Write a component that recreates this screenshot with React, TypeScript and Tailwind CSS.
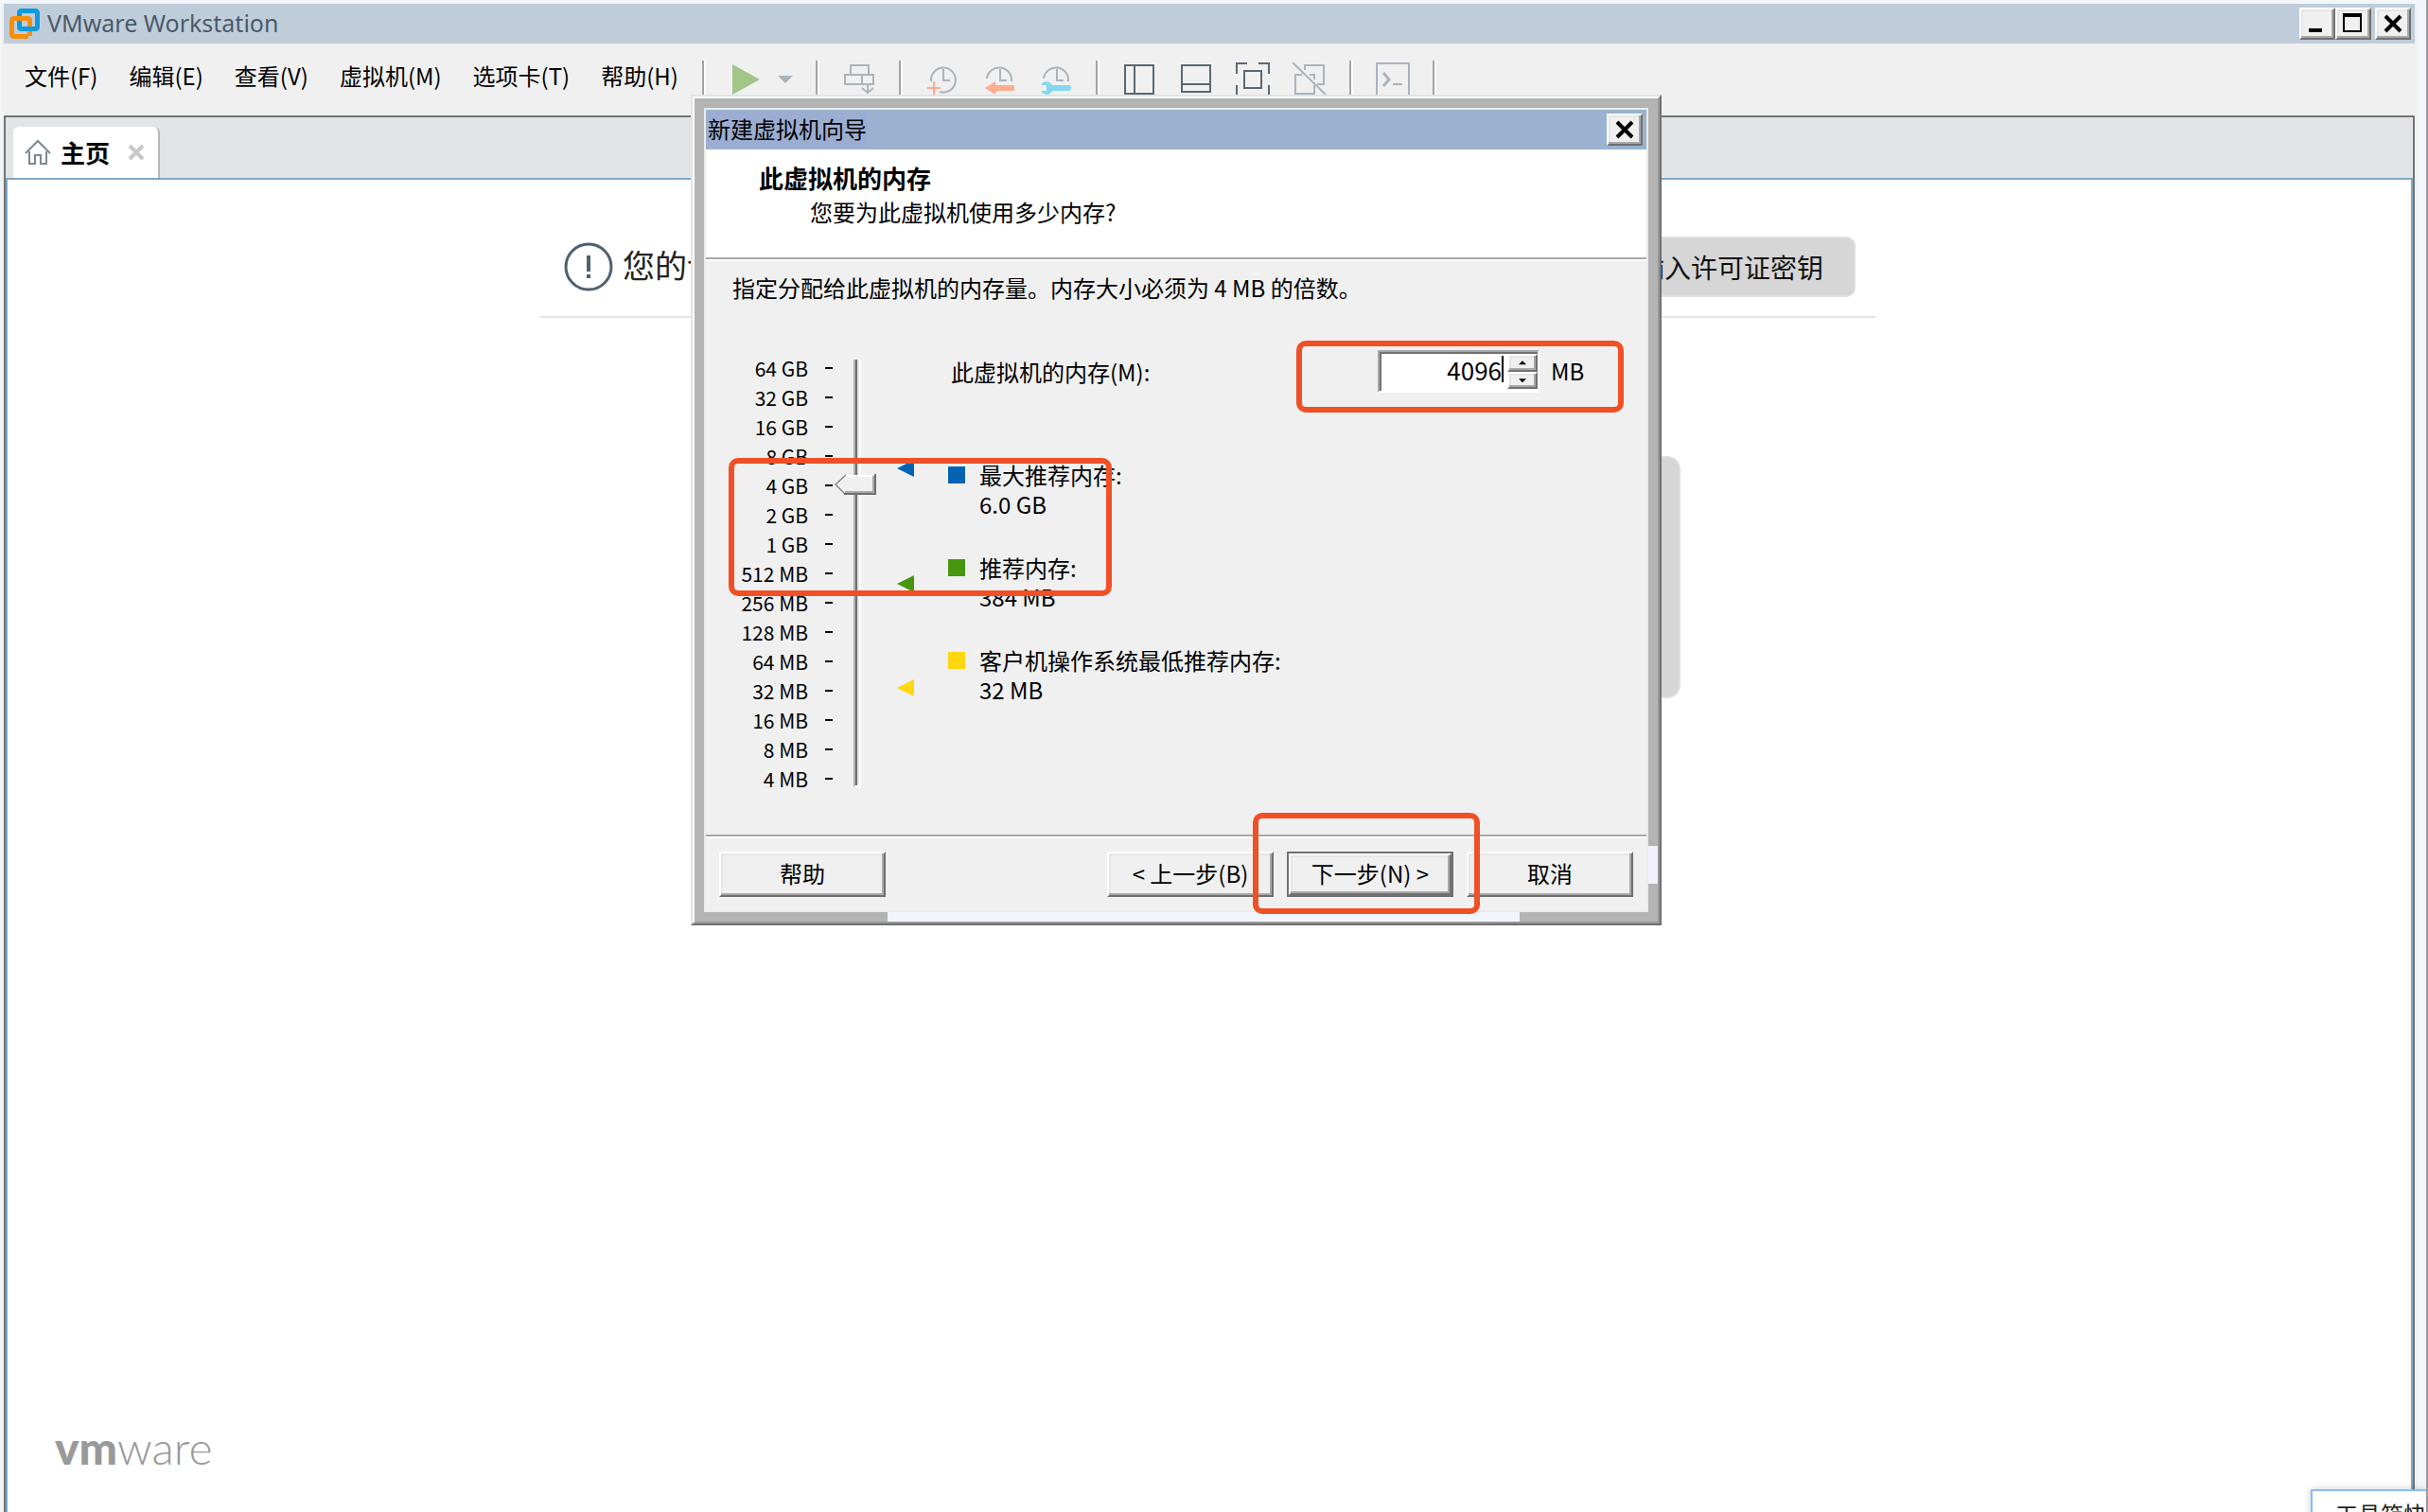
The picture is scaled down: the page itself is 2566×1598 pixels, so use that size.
import { useState } from "react";
import type { ReactNode } from "react";

const menus = ["文件(F)", "编辑(E)", "查看(V)", "虚拟机(M)", "选项卡(T)", "帮助(H)"];

const sizes = [
  "64 GB",
  "32 GB",
  "16 GB",
  "8 GB",
  "4 GB",
  "2 GB",
  "1 GB",
  "512 MB",
  "256 MB",
  "128 MB",
  "64 MB",
  "32 MB",
  "16 MB",
  "8 MB",
  "4 MB",
];

const hints = [
  { label: "最大推荐内存:", value: "6.0 GB", mb: 6144, bg: "bg-[#0063b1]", fill: "fill-[#0063b1]" },
  { label: "推荐内存:", value: "384 MB", mb: 384, bg: "bg-[#489610]", fill: "fill-[#489610]" },
  { label: "客户机操作系统最低推荐内存:", value: "32 MB", mb: 32, bg: "bg-[#ffd60f]", fill: "fill-[#ffd60f]" },
];

const bevel =
  "border-2 border-t-white border-l-white border-r-[#707070] border-b-[#707070] bg-[#f0f0f0] shadow-[inset_-2px_-2px_0_#a8a8a8,inset_2px_2px_0_#e6e6e6]";

// distance of a memory size from the top of the scale, one step per doubling
function scaleTop(mb: number) {
  return Math.round(20 + Math.log2(65536 / mb) * 30.6);
}

function Separator() {
  return <span className="h-9 w-1 shrink-0 border-l-2 border-r-2 border-l-[#a3a3a3] border-r-white" />;
}

function ToolButton({ label, tone = "stroke-[#a9b4bd]", children }: { label: string; tone?: string; children: ReactNode }) {
  return (
    <button type="button" aria-label={label} className="size-9 shrink-0">
      <svg viewBox="0 0 36 36" className={`size-9 fill-none stroke-2 ${tone}`}>
        {children}
      </svg>
    </button>
  );
}

function Toolbar() {
  const dark = "stroke-[#596975]";
  return (
    <div className="flex items-center gap-6">
      <Separator />
      <div className="flex items-center">
        <button type="button" aria-label="开启虚拟机" className="size-9">
          <svg viewBox="0 0 36 36" className="size-9 fill-[#a1c687]">
            <path d="M4 4 L33 20 L4 36 Z" />
          </svg>
        </button>
        <button type="button" aria-label="电源选项" className="h-9 w-8">
          <svg viewBox="0 0 32 36" className="h-9 w-8 fill-[#a9b4bd]">
            <path d="M16 16 H32 L24 24 Z" />
          </svg>
        </button>
      </div>
      <Separator />
      <ToolButton label="发送 Ctrl+Alt+Del">
        <path d="M9 15 V5 H28 V15 M3 15 H33 V25 H3 Z M21 15 V25 M27 25 V35 M21 29 L27 34 L33 29" />
      </ToolButton>
      <Separator />
      <ToolButton label="拍摄快照">
        <path d="M6 22 A13 13 0 1 1 15 33 M19 9 V21 H26" />
        <path d="M9 22 V36 M2 29 H16" className="stroke-[#ffac8f]" />
      </ToolButton>
      <ToolButton label="恢复快照">
        <path d="M5 19 A13 13 0 1 1 31 22 M19 9 V21 H26" />
        <path d="M3 29 L14 22 V26 H34 V32 H14 V36 Z" className="fill-[#ffac8f] stroke-none" />
      </ToolButton>
      <ToolButton label="管理快照">
        <path d="M5 19 A13 13 0 1 1 31 22 M19 9 V21 H26" />
        <path
          d="M3 24 Q7 21 11 23 Q13 24 14 26 H32 Q34 26 34 29 Q34 32 32 32 H14 Q13 35 9 36 Q6 36 3 34 V32 H8 V26 H3 Z"
          className="fill-[#84d7f0] stroke-none"
        />
      </ToolButton>
      <Separator />
      <ToolButton label="显示库" tone={dark}>
        <path d="M3 5 H33 V35 H3 Z M13 5 V35" />
      </ToolButton>
      <ToolButton label="显示缩略图栏" tone={dark}>
        <path d="M3 5 H33 V33 H3 Z M3 25 H33" />
      </ToolButton>
      <ToolButton label="进入全屏" tone={dark}>
        <path d="M1 14 V3 H12 M24 3 H35 V14 M1 26 V36 M35 26 V36 M9 11 H27 V29 H9 Z" />
      </ToolButton>
      <ToolButton label="Unity 模式">
        <path d="M13 10 V5 H33 V25 H26 M10 15 H3 V35 H23 V26 M18 15 H23 V20 M0 2 L35 36" />
      </ToolButton>
      <Separator />
      <ToolButton label="控制台视图">
        <path d="M1 3 H35 V39 H1 Z" />
        <path d="M8 13 L14 20 L8 27" strokeWidth="3" />
        <path d="M18 25 H28" />
      </ToolButton>
      <Separator />
    </div>
  );
}

function TitleBar() {
  return (
    <header className="mx-0.5 flex h-[42px] items-center bg-[#bfcddb] pr-1 pl-1.5">
      <svg viewBox="0 0 32 32" className="size-8 fill-none" strokeWidth="5">
        <rect x="10.500" y="2.500" width="19" height="19" rx="2" className="stroke-[#0e9ade]" />
        <path d="M20 29.500 H5 Q2.500 29.500 2.500 27 V13 Q2.500 10.500 5 10.500 H19 Q21.500 10.500 21.500 13 V29" className="stroke-[#f68e0b]" />
        <path d="M10.500 13 V19 Q10.500 21.500 13 21.500 H24" className="stroke-[#0e9ade]" />
      </svg>
      <h1 className="ml-2 font-['Noto_Sans','Noto_Sans_CJK_SC',sans-serif] text-[25px] text-[#4b5a68]">
        VMware Workstation
      </h1>
      <div className="ml-auto flex">
        <button type="button" aria-label="最小化" className={`h-[34px] w-[38px] ${bevel}`}>
          <svg viewBox="0 0 34 30" className="h-full w-full">
            <path d="M8 20 H22 V24 H8 Z" />
          </svg>
        </button>
        <button type="button" aria-label="最大化" className={`h-[34px] w-[38px] ${bevel}`}>
          <svg viewBox="0 0 34 30" className="h-full w-full">
            <path d="M6 4 H26 V24 H6 Z M8 8 V22 H24 V8 Z" fillRule="evenodd" />
          </svg>
        </button>
        <button type="button" aria-label="关闭" className={`ml-1 h-[34px] w-[38px] ${bevel}`}>
          <svg viewBox="0 0 34 30" className="h-full w-full stroke-black" strokeWidth="4">
            <path d="M9 7 L25 23 M25 7 L9 23" />
          </svg>
        </button>
      </div>
    </header>
  );
}

function HomePage() {
  return (
    <main className="flex min-h-0 flex-1 flex-col border-x-2 border-t-2 border-[#7fa8c6] bg-white pr-1">
      <div className="mx-auto mt-[60px] flex w-full max-w-[1412px] items-center gap-2.5 border-b-2 border-[#e6e6e6] pr-[21px] pb-5 pl-[26px]">
        <svg viewBox="0 0 52 52" className="size-[52px] fill-none stroke-[#50606f]" strokeWidth="3">
          <circle cx="26" cy="26" r="24" />
          <path d="M26 14 V31 M26 34 V38" strokeWidth="4" />
        </svg>
        <p className="pb-1 text-[34px] leading-[52px] text-[#222]">您的许可证</p>
        <button type="button" className="ml-auto h-16 rounded-[10px] border-2 border-[#dfdfdf] bg-[#d6d6d6] px-8 text-[28px] text-[#111]">
          输入许可证密钥
        </button>
      </div>
      <div className="mx-auto mt-[146px] flex w-full max-w-[1000px] justify-between">
        <button type="button" aria-label="创建新的虚拟机" className="size-64 rounded-[14px] border-2 border-[#dfdfdf] bg-[#d6d6d6]" />
        <button type="button" aria-label="打开虚拟机" className="size-64 rounded-[14px] border-2 border-[#dfdfdf] bg-[#d6d6d6]" />
        <button type="button" aria-label="连接远程服务器" className="size-64 rounded-[14px] border-2 border-[#dfdfdf] bg-[#d6d6d6]" />
      </div>
      <p className="mt-auto pb-[38px] pl-[50px] font-['Lato',sans-serif] text-[48px] leading-[60px] text-[#999]">
        <span className="font-black">vm</span>
        <span className="font-light">ware</span>
      </p>
    </main>
  );
}

function MemorySlider({ memory, onChange }: { memory: number; onChange: (mb: number) => void }) {
  return (
    <div className="relative w-[120px]">
      <span className="absolute top-2.5 bottom-2 left-5 w-2 border-x-2 border-b-2 border-l-[#b0b0b0] border-r-white border-b-white bg-[linear-gradient(to_right,#707070_50%,#e6e6e6_50%)]" />
      <svg
        viewBox="0 0 44 22"
        className="absolute left-0 h-[22px] w-11 -translate-y-1/2"
        style={{ top: scaleTop(memory) }}
      >
        <path d="M1 11 L11 1 H43 V21 H11 Z" className="fill-[#f0f0f0]" />
        <path d="M11 20 L2 11 L11 2 H41" className="fill-none stroke-white stroke-2" />
        <path d="M12 1 L1 11 L11 21" className="fill-none stroke-[#808080]" strokeWidth="1.500" />
        <path d="M11 19 H41 V2" className="fill-none stroke-[#a8a8a8] stroke-2" />
        <path d="M10 21 H43 V0" className="fill-none stroke-[#707070] stroke-2" />
      </svg>
      {hints.map((hint) => (
        <svg
          key={hint.mb}
          viewBox="0 0 18 18"
          className={`absolute left-[66px] size-[18px] -translate-y-1/2 ${hint.fill}`}
          style={{ top: scaleTop(hint.mb) }}
        >
          <path d="M18 0 V18 L0 9 Z" />
        </svg>
      ))}
      <input
        type="range"
        aria-label="内存大小"
        min={2}
        max={16}
        value={Math.round(Math.log2(memory))}
        onChange={(e) => onChange(2 ** Number(e.target.value))}
        className="absolute top-0 left-0 h-full w-11 opacity-0 [direction:rtl] [writing-mode:vertical-lr]"
      />
    </div>
  );
}

function MemoryWizard() {
  const [memory, setMemory] = useState(4096);

  return (
    <section
      role="dialog"
      aria-labelledby="wizard-title"
      className="absolute top-[100px] left-[730px] w-[1026px] border-2 border-t-[#e3e3e3] border-r-[#707070] border-b-[#707070] border-l-[#e3e3e3] text-[24px] leading-9 text-black"
    >
      <div className="border-2 border-t-white border-r-[#999] border-b-[#999] border-l-white bg-[#b4b4b4] p-2.5">
        <div className="border-2 border-[#ebebeb] bg-[#f0f0f0]">
          <div className="flex h-[42px] items-center justify-between bg-[#9ab2d0] pr-1 pl-0.5">
            <h2 id="wizard-title" className="bg-[#9badd1] pb-0.5">新建虚拟机向导</h2>
            <button type="button" aria-label="关闭向导" className={`h-[34px] w-[38px] ${bevel}`}>
              <svg viewBox="0 0 34 30" className="h-full w-full stroke-black" strokeWidth="4">
                <path d="M9 7 L25 23 M25 7 L9 23" />
              </svg>
            </button>
          </div>

          <div className="border-b-2 border-[#a9a9a9] bg-white pt-3 pb-[30px]">
            <h3 className="pl-14 text-[26px] font-bold">此虚拟机的内存</h3>
            <p className="pl-[110px]">您要为此虚拟机使用多少内存?</p>
          </div>

          <div className="border-t-2 border-white pt-2.5 pb-[42px] pl-7">
            <p>指定分配给此虚拟机的内存量。内存大小必须为 4 MB 的倍数。</p>
            <div className="mt-12 flex">
              <div className="flex">
                <ul className="pt-[3px] pb-0.5">
                  {sizes.map((size) => (
                    <li key={size} className="flex h-[31px] items-center text-[21px]">
                      <span className="w-20 text-right">{size}</span>
                      <span className="mr-0.5 ml-[18px] h-0.5 w-2 bg-black" />
                    </li>
                  ))}
                </ul>
                <MemorySlider memory={memory} onChange={setMemory} />
              </div>

              <div className="flex-1">
                <div className="flex h-[45px] items-center pl-[3px]">
                  <label htmlFor="memory" className="w-[451px]">
                    此虚拟机的内存(M):
                  </label>
                  <div className="flex h-full w-[171px] border-2 border-t-[#a8a8a8] border-r-white border-b-white border-l-[#a8a8a8] bg-white shadow-[inset_2px_2px_0_#707070]">
                    <input
                      id="memory"
                      type="text"
                      inputMode="numeric"
                      value={memory}
                      onChange={(e) => setMemory(Number(e.target.value) || 4)}
                      className="w-0 flex-1 bg-transparent pb-1 text-right text-[26px] leading-9 outline-none"
                    />
                    <span className="mt-1 mr-1 h-7 w-0.5 bg-black" />
                    <div className="flex w-8 flex-col pt-0.5 pb-0.5">
                      <button type="button" aria-label="增加" onClick={() => setMemory(memory + 4)} className={`flex-1 ${bevel}`}>
                        <svg viewBox="0 0 28 14" className="h-full w-full">
                          <path d="M10 9 L14 5 L18 9 Z" />
                        </svg>
                      </button>
                      <button type="button" aria-label="减少" onClick={() => setMemory(memory - 4)} className={`flex-1 ${bevel}`}>
                        <svg viewBox="0 0 28 14" className="h-full w-full">
                          <path d="M10 5 L14 9 L18 5 Z" />
                        </svg>
                      </button>
                    </div>
                  </div>
                  <span className="ml-3 pb-0.5">MB</span>
                </div>

                <dl className="mt-[71px] flex flex-col gap-9 leading-[31px]">
                  {hints.map((hint) => (
                    <div key={hint.label}>
                      <dt className="flex items-center gap-[15px]">
                        <span className={`size-[18px] ${hint.bg}`} />
                        {hint.label}
                      </dt>
                      <dd className="pl-[33px]">{hint.value}</dd>
                    </div>
                  ))}
                </dl>
              </div>
            </div>
          </div>

          <div className="border-t-2 border-[#a9a9a9]">
            <div className="flex gap-3.5 border-t-2 border-white p-3.5">
              <button type="button" className={`mr-auto h-12 w-44 pb-0.5 ${bevel}`}>
                帮助
              </button>
              <button type="button" className={`h-12 w-44 pb-0.5 ${bevel}`}>
                &lt; 上一步(B)
              </button>
              <div className="border-2 border-[#707070]">
                <button type="button" className={`block h-11 w-[172px] pb-0.5 ${bevel}`}>
                  下一步(N) &gt;
                </button>
              </div>
              <button type="button" className={`h-12 w-44 pb-0.5 ${bevel}`}>
                取消
              </button>
            </div>
          </div>
        </div>
      </div>
      {/* gaps in the frame */}
      <span className="absolute bottom-0.5 left-[206px] h-2.5 w-[668px] bg-[#f2f5fb]" />
      <span className="absolute right-0.5 bottom-[42px] h-10 w-2.5 bg-[#f3f0fc]" />
    </section>
  );
}

export default function App() {
  return (
    <div className="relative flex h-screen flex-col overflow-hidden border-r-2 border-[#999] bg-[#f2f6fb] pt-1 pr-2.5 pl-0.5 font-['Noto_Sans_CJK_SC',sans-serif]">
      <div className="flex min-h-0 flex-1 flex-col bg-[#f0f0f0]">
        <TitleBar />
        <div className="mb-1 flex h-[72px] items-center">
          <nav className="flex w-[740px] shrink-0 gap-[33px] pb-1 pl-6 text-[24px] leading-9 whitespace-nowrap">
            {menus.map((menu) => (
              <button key={menu} type="button">
                {menu}
              </button>
            ))}
          </nav>
          <Toolbar />
        </div>

        <div className="mx-0.5 flex min-h-0 flex-1 flex-col border-x-2 border-t-2 border-[#737373]">
          <div className="flex h-16 items-end bg-[#e2e4e7] pl-2">
            <div className="flex h-[54px] w-[155px] items-center rounded-t-md border-r-2 border-[#b8b8b8] bg-white pr-3.5 pl-3">
              <svg viewBox="0 0 28 28" className="size-7 fill-none stroke-[#7b8895] stroke-2">
                <path d="M1 15 L14 2 L27 15 M5 13 V26 H11 V17 H17 V26 H23 V13" />
              </svg>
              <span className="ml-2.5 text-[26px] leading-9 font-bold">主页</span>
              <button type="button" aria-label="关闭标签页" className="ml-auto">
                <svg viewBox="0 0 18 18" className="size-[18px] stroke-[#c8c8c8]" strokeWidth="4">
                  <path d="M2 2 L16 16 M16 2 L2 16" />
                </svg>
              </button>
            </div>
          </div>
          <HomePage />
        </div>
      </div>

      <MemoryWizard />

      {/* highlights */}
      <span className="pointer-events-none absolute top-[360px] left-[1370px] h-[76px] w-[346px] rounded-[10px] border-[6px] border-[#f05025]" />
      <span className="pointer-events-none absolute top-[484px] left-[770px] h-[146px] w-[405px] rounded-[10px] border-[6px] border-[#f05025]" />
      <span className="pointer-events-none absolute top-[859px] left-[1324px] h-[107px] w-[240px] rounded-[10px] border-[6px] border-[#f05025]" />

      <div className="absolute right-0 -bottom-5 h-11 w-[122px] overflow-hidden border-t-2 border-l-2 border-[#85bdf5] bg-white pt-2 pl-6 text-[24px] leading-8 whitespace-nowrap text-[#222] shadow-[0_0_8px_#0003]">
        工具箱快捷
      </div>
    </div>
  );
}
